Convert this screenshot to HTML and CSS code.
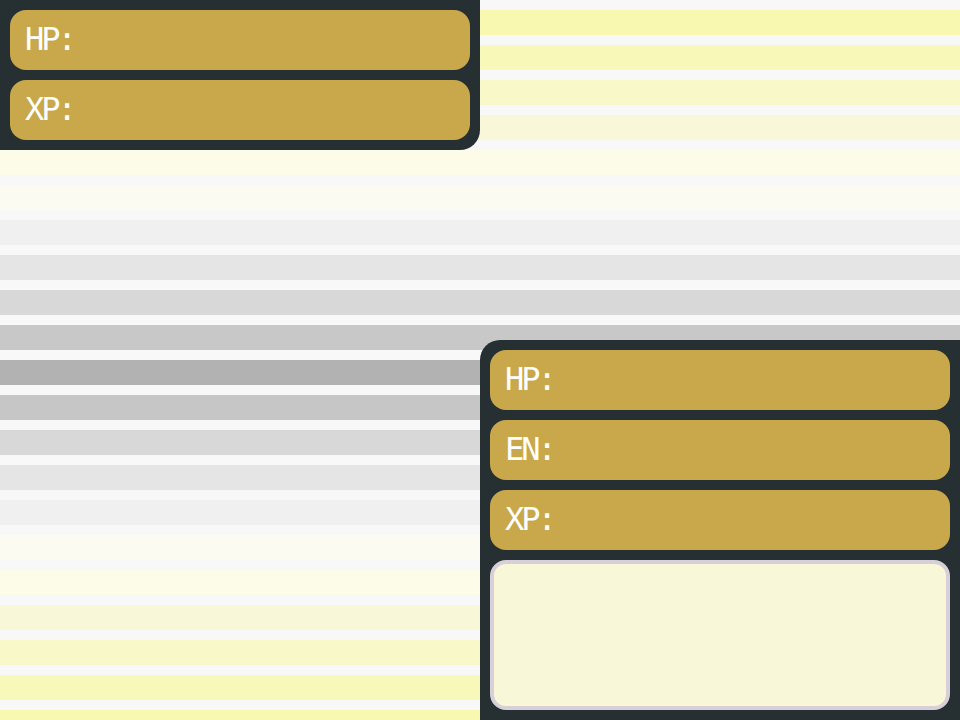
FILE: index.html
```html
<!DOCTYPE html>
<html lang="en">
<head>
<meta charset="utf-8">
<title>Battle HUD</title>
<link rel="stylesheet" href="styles.css">
</head>
<body>
<div class="stage">
  <section class="panel panel-enemy">
    <div class="bar"><span class="label">HP:</span></div>
    <div class="bar"><span class="label">XP:</span></div>
  </section>
  <section class="panel panel-player">
    <div class="bar"><span class="label">HP:</span></div>
    <div class="bar"><span class="label">EN:</span></div>
    <div class="bar"><span class="label">XP:</span></div>
    <div class="message"></div>
  </section>
</div>
</body>
</html>
```
FILE: styles.css
```css
html, body {
  margin: 0;
  padding: 0;
}
body {
  width: 960px;
  height: 720px;
  overflow: hidden;
  font-family: "DejaVu Sans Mono", "Liberation Mono", monospace;
}
.stage {
  width: 960px;
  height: 720px;
  display: grid;
  grid-template-columns: 480px 480px;
  grid-template-rows: 150px 1fr 380px;
  background: linear-gradient(to bottom,
    #f8f8f8 0 10px, #f8f8b0 10px 35px,
    #f8f8f8 35px 45px, #f8f8b8 45px 70px,
    #f8f8f8 70px 80px, #f8f8c8 80px 105px,
    #f8f8f8 105px 115px, #f8f8d8 115px 140px,
    #f8f8f8 140px 150px, #fcfce8 150px 175px,
    #f8f8f8 175px 185px, #fbfbf2 185px 210px,
    #f8f8f8 210px 220px, #f0f0f0 220px 245px,
    #f8f8f8 245px 255px, #e5e5e5 255px 280px,
    #f8f8f8 280px 290px, #d8d8d8 290px 315px,
    #f8f8f8 315px 325px, #c8c8c8 325px 350px,
    #f8f8f8 350px 360px, #b2b2b2 360px 385px,
    #f8f8f8 385px 395px, #c6c6c6 395px 420px,
    #f8f8f8 420px 430px, #d8d8d8 430px 455px,
    #f8f8f8 455px 465px, #e5e5e5 465px 490px,
    #f8f8f8 490px 500px, #f0f0f0 500px 525px,
    #f8f8f8 525px 535px, #fbfbf2 535px 560px,
    #f8f8f8 560px 570px, #fcfce8 570px 595px,
    #f8f8f8 595px 605px, #f8f8d8 605px 630px,
    #f8f8f8 630px 640px, #f8f8c8 640px 665px,
    #f8f8f8 665px 675px, #f8f8b8 675px 700px,
    #f8f8f8 700px 710px, #f8f8b0 710px 720px);
}
.panel {
  background: #263032;
  padding: 10px;
  display: flex;
  flex-direction: column;
  gap: 10px;
  box-sizing: border-box;
}
.panel-enemy {
  grid-column: 1;
  grid-row: 1;
  border-bottom-right-radius: 20px;
}
.panel-player {
  grid-column: 2;
  grid-row: 3;
  border-top-left-radius: 20px;
}
.bar {
  height: 60px;
  background: #c8a84a;
  border-radius: 16px;
  padding-left: 15px;
  display: flex;
  align-items: center;
}
.label {
  color: #ffffff;
  font-size: 32px;
  line-height: 60px;
  letter-spacing: -3px;
  margin-top: -3px;
}
.message {
  height: 150px;
  box-sizing: border-box;
  background: #f8f8d8;
  border: 4px solid #d8d0d8;
  border-radius: 16px;
}
```
